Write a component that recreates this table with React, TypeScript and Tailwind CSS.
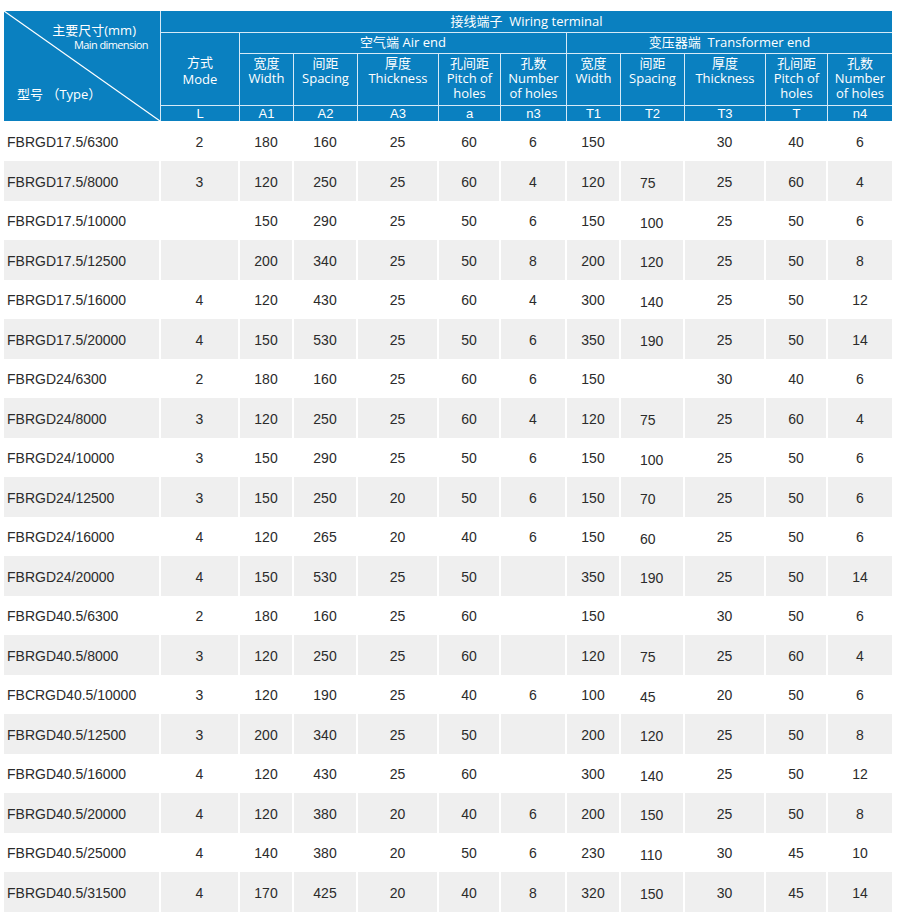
const HEAD_COLS =
  "grid-cols-[156px_78px_53px_63px_80px_61px_65px_53px_63px_80px_61px_64px]";
const BODY_COLS =
  "grid-cols-[155px_77px_52px_62px_79px_60px_64px_52px_62px_79px_60px_64px]";

const HEAD_FONT = "font-['Open_Sans','Noto_Sans_CJK_SC',sans-serif]";
const DATA_FONT = "font-['Liberation_Sans',Arial,sans-serif]";

type Row = [string, ...string[]];

const rows: Row[] = [
  ["FBRGD17.5/6300", "2", "180", "160", "25", "60", "6", "150", "", "30", "40", "6"],
  ["FBRGD17.5/8000", "3", "120", "250", "25", "60", "4", "120", "75", "25", "60", "4"],
  ["FBRGD17.5/10000", "", "150", "290", "25", "50", "6", "150", "100", "25", "50", "6"],
  ["FBRGD17.5/12500", "", "200", "340", "25", "50", "8", "200", "120", "25", "50", "8"],
  ["FBRGD17.5/16000", "4", "120", "430", "25", "60", "4", "300", "140", "25", "50", "12"],
  ["FBRGD17.5/20000", "4", "150", "530", "25", "50", "6", "350", "190", "25", "50", "14"],
  ["FBRGD24/6300", "2", "180", "160", "25", "60", "6", "150", "", "30", "40", "6"],
  ["FBRGD24/8000", "3", "120", "250", "25", "60", "4", "120", "75", "25", "60", "4"],
  ["FBRGD24/10000", "3", "150", "290", "25", "50", "6", "150", "100", "25", "50", "6"],
  ["FBRGD24/12500", "3", "150", "250", "20", "50", "6", "150", "70", "25", "50", "6"],
  ["FBRGD24/16000", "4", "120", "265", "20", "40", "6", "150", "60", "25", "50", "6"],
  ["FBRGD24/20000", "4", "150", "530", "25", "50", "", "350", "190", "25", "50", "14"],
  ["FBRGD40.5/6300", "2", "180", "160", "25", "60", "", "150", "", "30", "50", "6"],
  ["FBRGD40.5/8000", "3", "120", "250", "25", "60", "", "120", "75", "25", "60", "4"],
  ["FBCRGD40.5/10000", "3", "120", "190", "25", "40", "6", "100", "45", "20", "50", "6"],
  ["FBRGD40.5/12500", "3", "200", "340", "25", "50", "", "200", "120", "25", "50", "8"],
  ["FBRGD40.5/16000", "4", "120", "430", "25", "60", "", "300", "140", "25", "50", "12"],
  ["FBRGD40.5/20000", "4", "120", "380", "20", "40", "6", "200", "150", "25", "50", "8"],
  ["FBRGD40.5/25000", "4", "140", "380", "20", "50", "6", "230", "110", "30", "45", "10"],
  ["FBRGD40.5/31500", "4", "170", "425", "20", "40", "8", "320", "150", "30", "45", "14"],
];

const subHeads: [string, string[]][] = [
  ["宽度", ["Width"]],
  ["间距", ["Spacing"]],
  ["厚度", ["Thickness"]],
  ["孔间距", ["Pitch of", "holes"]],
  ["孔数", ["Number", "of holes"]],
  ["宽度", ["Width"]],
  ["间距", ["Spacing"]],
  ["厚度", ["Thickness"]],
  ["孔间距", ["Pitch of", "holes"]],
  ["孔数", ["Number", "of holes"]],
];

const symbols = ["L", "A1", "A2", "A3", "a", "n3", "T1", "T2", "T3", "T", "n4"];

function CornerCell() {
  return (
    <div className="relative row-span-4 col-start-1 row-start-1 bg-[#0a80c0] text-white">
      <svg
        className="absolute inset-0 h-full w-full"
        viewBox="0 0 156 110"
        preserveAspectRatio="none"
        aria-hidden
      >
        <line x1="0" y1="0" x2="156" y2="110" stroke="#ffffff" strokeWidth="1.2" />
      </svg>
      <div className="relative flex h-full flex-col">
        <div className="self-end pr-[24px] pt-[11px] text-[13px] leading-[16px]">
          主要尺寸(mm)
        </div>
        <div className="self-end pr-[12px] text-[11px] leading-[14px] tracking-[-0.6px]">
          Main dimension
        </div>
        <div className="mt-[33px] pl-[13px] text-[13px] leading-[18px]">型号 （Type）</div>
      </div>
    </div>
  );
}

function TableHeader() {
  return (
    <div
      className={`grid ${HEAD_COLS} grid-rows-[21px_20px_51px_15px] gap-px bg-[#d6eaf7] ${HEAD_FONT} text-white`}
    >
      <CornerCell />
      <div className="col-span-11 col-start-2 row-start-1 flex items-center justify-center bg-[#0a80c0] text-[13px]">
        接线端子&nbsp; Wiring terminal
      </div>
      <div className="col-start-2 row-span-2 row-start-2 flex flex-col items-center bg-[#0a80c0] pt-[21px] text-[13px] leading-[17px]">
        <span>方式</span>
        <span>Mode</span>
      </div>
      <div className="col-span-5 col-start-3 row-start-2 flex items-center justify-center bg-[#0a80c0] text-[13px]">
        空气端 Air end
      </div>
      <div className="col-span-5 col-start-8 row-start-2 flex items-center justify-center bg-[#0a80c0] text-[13px]">
        变压器端&nbsp; Transformer end
      </div>
      {subHeads.map(([zh, en], i) => (
        <div
          key={i}
          className="row-start-3 flex flex-col items-center bg-[#0a80c0] pt-[2px] text-[13px] leading-[15px]"
        >
          <span>{zh}</span>
          {en.map((line) => (
            <span key={line}>{line}</span>
          ))}
        </div>
      ))}
      {symbols.map((s, i) => (
        <div
          key={i}
          className={`row-start-4 flex items-center justify-center bg-[#0a80c0] ${DATA_FONT} text-[13px] leading-none`}
        >
          {s}
        </div>
      ))}
    </div>
  );
}

function DataRow({ row, index }: { row: Row; index: number }) {
  const shaded = index % 2 === 1;
  const height = index % 2 === 1 ? "h-[40px]" : "h-[39px]";
  return (
    <div className={`grid ${BODY_COLS} ${height} gap-x-[2px]`}>
      {row.map((value, col) => {
        const bg = shaded ? "bg-[#efefef]" : "bg-white";
        if (col === 0) {
          return (
            <div key={col} className={`flex items-center pl-[3px] pt-[2px] ${bg}`}>
              {value}
            </div>
          );
        }
        if (col === 8) {
          // T2 values sit left and slightly low in the source sheet
          return (
            <div key={col} className={`flex items-center pl-[19px] pt-[5px] ${bg}`}>
              {value}
            </div>
          );
        }
        return (
          <div key={col} className={`flex items-center justify-center pt-[2px] ${bg}`}>
            {value}
          </div>
        );
      })}
    </div>
  );
}

export default function App() {
  return (
    <div className="min-h-[923px] w-[900px] bg-white pl-[4px] pt-[11px]">
      <div className="w-[888px]">
        <TableHeader />
        <div className={`mt-px ${DATA_FONT} text-[14px] text-[#2b2b2b]`}>
          {rows.map((row, i) => (
            <DataRow key={row[0]} row={row} index={i} />
          ))}
        </div>
      </div>
    </div>
  );
}
